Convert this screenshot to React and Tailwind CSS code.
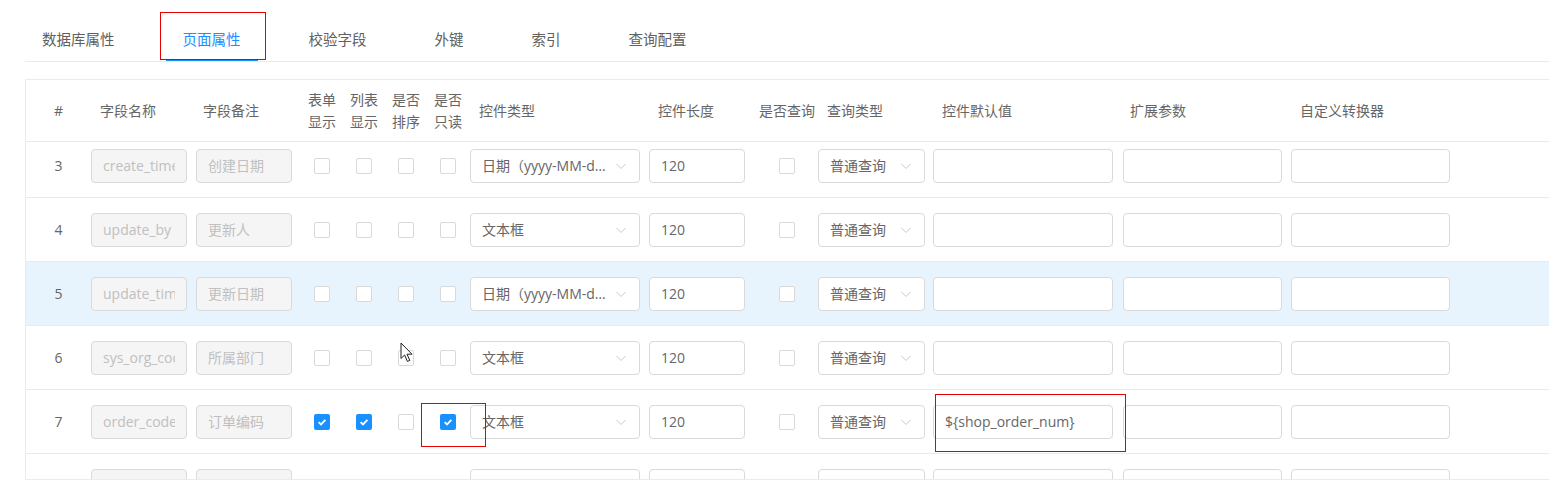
const TABS = ['数据库属性', '页面属性', '校验字段', '外键', '索引', '查询配置'];

const ROWS = [
  { n: 3, name: 'create_time', note: '创建日期', type: '日期（yyyy-MM-dd）' },
  { n: 4, name: 'update_by', note: '更新人', type: '文本框' },
  { n: 5, name: 'update_time', note: '更新日期', type: '日期（yyyy-MM-dd）', hover: true },
  { n: 6, name: 'sys_org_code', note: '所属部门', type: '文本框' },
  { n: 7, name: 'order_code', note: '订单编码', type: '文本框', form: true, list: true, ro: true, def: '${shop_order_num}' },
  { n: '', name: '', note: '', type: '', qt: '', len: '', blank: true },
];

function Chevron() {
  return (
    <svg width="12" height="12" viewBox="0 0 12 12" className="absolute right-[12px] top-1/2 -translate-y-1/2">
      <path d="M1.5 4 L6 8.5 L10.5 4" fill="none" stroke="#c8c8c8" strokeWidth="1" />
    </svg>
  );
}

function Checkbox({ checked }) {
  if (checked) {
    return (
      <span className="w-[16px] h-[16px] rounded-[2px] bg-[#1890ff] flex items-center justify-center">
        <svg width="10" height="10" viewBox="0 0 10 10">
          <path d="M1.6 5.2 L4 7.4 L8.4 2.8" fill="none" stroke="#fff" strokeWidth="1.8" />
        </svg>
      </span>
    );
  }
  return <span className="w-[16px] h-[16px] rounded-[2px] border border-[#d9d9d9] bg-white" />;
}

function Input({ value, disabled, className }) {
  return (
    <div
      className={`h-[34px] rounded-[4px] border border-[#d9d9d9] px-[11px] flex items-center ${
        disabled ? 'bg-[#f5f5f5] text-[#c0c0c0]' : 'bg-white text-[#666]'
      } ${className}`}
    >
      <span className="flex-1 min-w-0 overflow-hidden whitespace-nowrap">{value}</span>
    </div>
  );
}

function Select({ value, className }) {
  return (
    <div className={`relative h-[34px] rounded-[4px] border border-[#d9d9d9] bg-white pl-[11px] pr-[30px] flex items-center text-[#666] ${className}`}>
      <span className="truncate">{value}</span>
      <Chevron />
    </div>
  );
}

function Row({ r }) {
  return (
    <div className={`flex items-center h-[64px] border-b border-[#ebebeb] ${r.hover ? 'bg-[#e8f4fd]' : 'bg-white'}`}>
      <div className="w-[65px] text-center text-[#666]">{r.n}</div>
      <div className="w-[105px]"><Input value={r.name} disabled className="w-[96px]" /></div>
      <div className="w-[105px]"><Input value={r.note} disabled className="w-[96px]" /></div>
      {!r.blank ? (
        <>
          <div className="w-[42px] flex justify-center"><Checkbox checked={r.form} /></div>
          <div className="w-[42px] flex justify-center"><Checkbox checked={r.list} /></div>
          <div className="w-[42px] flex justify-center"><Checkbox checked={r.sort} /></div>
          <div className="w-[42px] flex justify-center"><Checkbox checked={r.ro} /></div>
        </>
      ) : (
        <div className="w-[168px]" />
      )}
      <div className="w-[180px] pl-[1px]"><Select value={r.type} className="w-[170px]" /></div>
      <div className="w-[108px]"><Input value={r.len ?? '120'} className="w-[96px]" /></div>
      <div className="w-[60px] flex justify-center">{!r.blank && <Checkbox />}</div>
      <div className="w-[116px] pl-[1px]"><Select value={r.qt ?? '普通查询'} className="w-[107px]" /></div>
      <div className="w-[190px]"><Input value={r.def} className="w-[180px]" /></div>
      <div className="w-[168px]"><Input value="" className="w-[159px]" /></div>
      <div className="w-[168px]"><Input value="" className="w-[159px]" /></div>
    </div>
  );
}

export default function App() {
  return (
    <div className="relative w-[1549px] h-[500px] overflow-hidden bg-white font-['Open_Sans','Noto_Sans_CJK_SC',sans-serif] text-[14px]">
      <div className="ml-[25px]">
        {/* tabs */}
        <div className="flex items-end h-[62px] border-b border-[#ebebeb] gap-[34px]">
          {TABS.map((t, i) => (
            <div
              key={t}
              className={`relative px-[17px] pb-[10px] leading-[22px] text-[14.5px] ${i === 1 ? 'text-[#1890ff]' : 'text-[#606060]'}`}
            >
              {t}
              {i === 1 && <span className="absolute left-0 right-0 bottom-0 h-[2px] bg-[#1890ff]" />}
            </div>
          ))}
        </div>

        {/* table */}
        <div className="mt-[17px] border-l border-t border-[#ebebeb] w-[1600px]">
          <div className="flex items-center h-[62px] border-b border-[#ebebeb] text-[#666] leading-[22px] whitespace-nowrap">
            <div className="w-[65px] text-center">#</div>
            <div className="w-[105px] pl-[9px]">字段名称</div>
            <div className="w-[105px] pl-[7px]">字段备注</div>
            <div className="w-[42px] text-center">表单<br />显示</div>
            <div className="w-[42px] text-center">列表<br />显示</div>
            <div className="w-[42px] text-center">是否<br />排序</div>
            <div className="w-[42px] text-center">是否<br />只读</div>
            <div className="w-[180px] pl-[10px]">控件类型</div>
            <div className="w-[108px] pl-[9px]">控件长度</div>
            <div className="w-[60px] text-center">是否查询</div>
            <div className="w-[116px] pl-[10px]">查询类型</div>
            <div className="w-[190px] pl-[9px]">控件默认值</div>
            <div className="w-[168px] pl-[7px]">扩展参数</div>
            <div className="w-[168px] pl-[9px]">自定义转换器</div>
          </div>
          <div className="h-[338px] overflow-hidden border-b border-[#ebebeb]">
            <div className="-mt-[8px]">
              {ROWS.map((r, i) => (
                <Row key={i} r={r} />
              ))}
            </div>
          </div>
        </div>
      </div>

      {/* annotation boxes */}
      <div className="absolute left-[160px] top-[12px] w-[106px] h-[48px] border border-[#e60000]" />
      <div className="absolute left-[421px] top-[403px] w-[65px] h-[44px] border border-[#e60000]" />
      <div className="absolute left-[935px] top-[394px] w-[191px] h-[58px] border border-[#e60000]" />

      {/* mouse pointer */}
      <svg width="14" height="21" viewBox="0 0 14 21" className="absolute left-[400px] top-[342px]">
        <path d="M1 1 L1 16.5 L4.6 13 L7.4 19.4 L9.8 18.4 L7 12.2 L12 12.2 Z" fill="#fff" stroke="#222" strokeWidth="1" strokeLinejoin="round" />
      </svg>
    </div>
  );
}
